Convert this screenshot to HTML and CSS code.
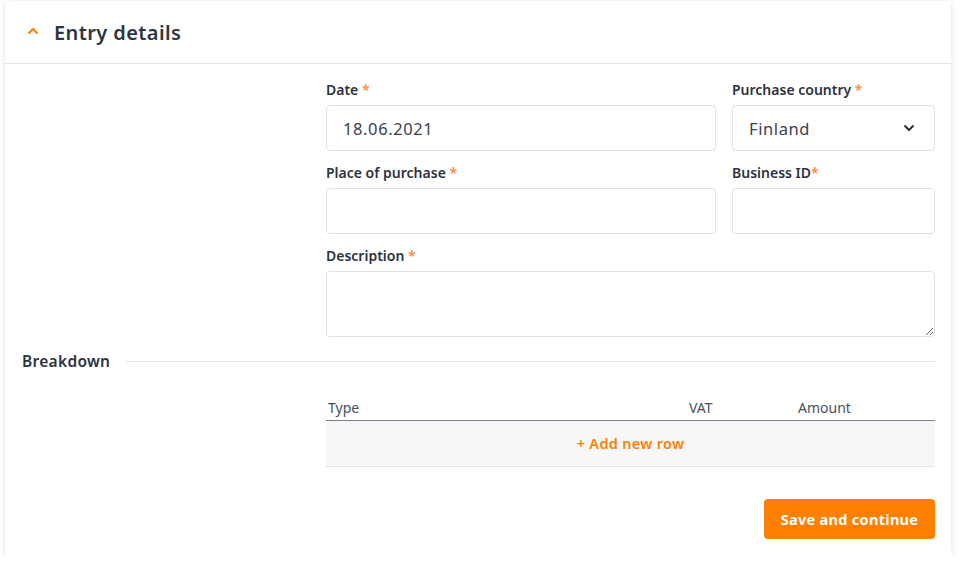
FILE: index.html
```html
<!DOCTYPE html>
<html lang="en">
<head>
    <meta charset="UTF-8">
    <title>Entry details</title>
    <link rel="stylesheet" href="styles.css">
</head>
<body>
    <div class="card">
        <div class="card-header">
            <svg class="chevron" width="12" height="8" viewBox="0 0 12 8">
                <path d="M1.5 6.5 L6 2 L10.5 6.5" fill="none" stroke="#ff8000" stroke-width="2"/>
            </svg>
            <h2>Entry details</h2>
        </div>

        <div class="card-body">
            <div class="form-grid">
                <div class="field">
                    <label>Date <span class="req">*</span></label>
                    <input type="text" class="input" value="18.06.2021">
                </div>
                <div class="field">
                    <label>Purchase country <span class="req">*</span></label>
                    <div class="input select">
                        <span>Finland</span>
                        <svg width="12" height="8" viewBox="0 0 12 8">
                            <path d="M1.5 1.5 L6 6 L10.5 1.5" fill="none" stroke="#2d3340" stroke-width="2"/>
                        </svg>
                    </div>
                </div>
                <div class="field">
                    <label>Place of purchase <span class="req">*</span></label>
                    <input type="text" class="input">
                </div>
                <div class="field">
                    <label>Business ID<span class="req">*</span></label>
                    <input type="text" class="input">
                </div>
                <div class="field wide">
                    <label>Description <span class="req">*</span></label>
                    <textarea class="input textarea"></textarea>
                </div>
            </div>

            <div class="section-title">
                <span>Breakdown</span>
                <div class="rule"></div>
            </div>

            <div class="breakdown">
                <div class="table-head">
                    <span class="col-type">Type</span>
                    <span class="col-vat">VAT</span>
                    <span class="col-amount">Amount</span>
                </div>
                <div class="add-row">+ Add new row</div>
            </div>

            <div class="actions">
                <button class="btn-primary">Save and continue</button>
            </div>
        </div>
    </div>
</body>
</html>
```

FILE: styles.css
```css
body {
    margin: 0;
    padding: 1px 8px 0 5px;
    background-color: #fff;
    font-family: "Noto Sans", sans-serif;
    color: #2d3340;
}
.card {
    background-color: #fff;
    box-shadow: 0 1px 6px rgba(0, 0, 0, 0.12);
    height: 554px;
}
.card-header {
    display: flex;
    align-items: center;
    height: 62px;
    border-bottom: 1px solid #e4e4e4;
    padding-left: 22px;
}
.chevron {
    margin-right: 15px;
    margin-top: -2px;
}
.card-header h2 {
    margin: 0;
    font-size: 20px;
    font-weight: 600;
    letter-spacing: 0.4px;
    color: #2e3440;
}
.card-body {
    padding: 16px 16px 0 17px;
}
.form-grid {
    display: grid;
    grid-template-columns: 390px 203px;
    column-gap: 16px;
    row-gap: 12px;
    margin-left: 304px;
}
.field {
    display: flex;
    flex-direction: column;
}
.field.wide {
    grid-column: 1 / 3;
}
.field label {
    font-size: 14px;
    font-weight: 600;
    margin-bottom: 6px;
    height: 19px;
    line-height: 19px;
}
.req {
    color: #ff8a3d;
}
.input {
    box-sizing: border-box;
    height: 46px;
    border: 1px solid #e2e2e2;
    border-radius: 4px;
    padding: 0 16px;
    font-family: "Noto Sans", sans-serif;
    font-size: 16.5px;
    letter-spacing: 0.6px;
    color: #3c4250;
    background: #fff;
    outline: none;
}
.select {
    display: flex;
    align-items: center;
    justify-content: space-between;
    padding-right: 19px;
}
.textarea {
    height: 66px;
    resize: vertical;
}
.section-title {
    display: flex;
    align-items: center;
    margin-top: 13px;
    margin-left: -22px;
    padding-left: 22px;
    font-size: 15.5px;
    font-weight: 600;
    letter-spacing: 0.3px;
}
.section-title .rule {
    flex: 1;
    height: 1px;
    background-color: #e4e4e4;
    margin-left: 16px;
}
.breakdown {
    margin-left: 304px;
    margin-top: 26px;
}
.table-head {
    display: flex;
    font-size: 14px;
    color: #4a5060;
    padding: 0 2px 3px;
    border-bottom: 1px solid #7a8090;
}
.col-type {
    width: 361px;
}
.col-vat {
    width: 109px;
}
.add-row {
    height: 45px;
    line-height: 45px;
    text-align: center;
    background-color: #f7f7f7;
    border-bottom: 1px solid #e4e4e4;
    color: #ff8000;
    font-size: 14.5px;
    font-weight: 600;
    letter-spacing: 0.3px;
}
.actions {
    display: flex;
    justify-content: flex-end;
    margin-top: 32px;
}
.btn-primary {
    background-color: #ff8000;
    color: #fff;
    border: none;
    border-radius: 4px;
    height: 40px;
    width: 171px;
    font-family: "Noto Sans", sans-serif;
    font-size: 14.5px;
    font-weight: 700;
    letter-spacing: 0.3px;
}
```
